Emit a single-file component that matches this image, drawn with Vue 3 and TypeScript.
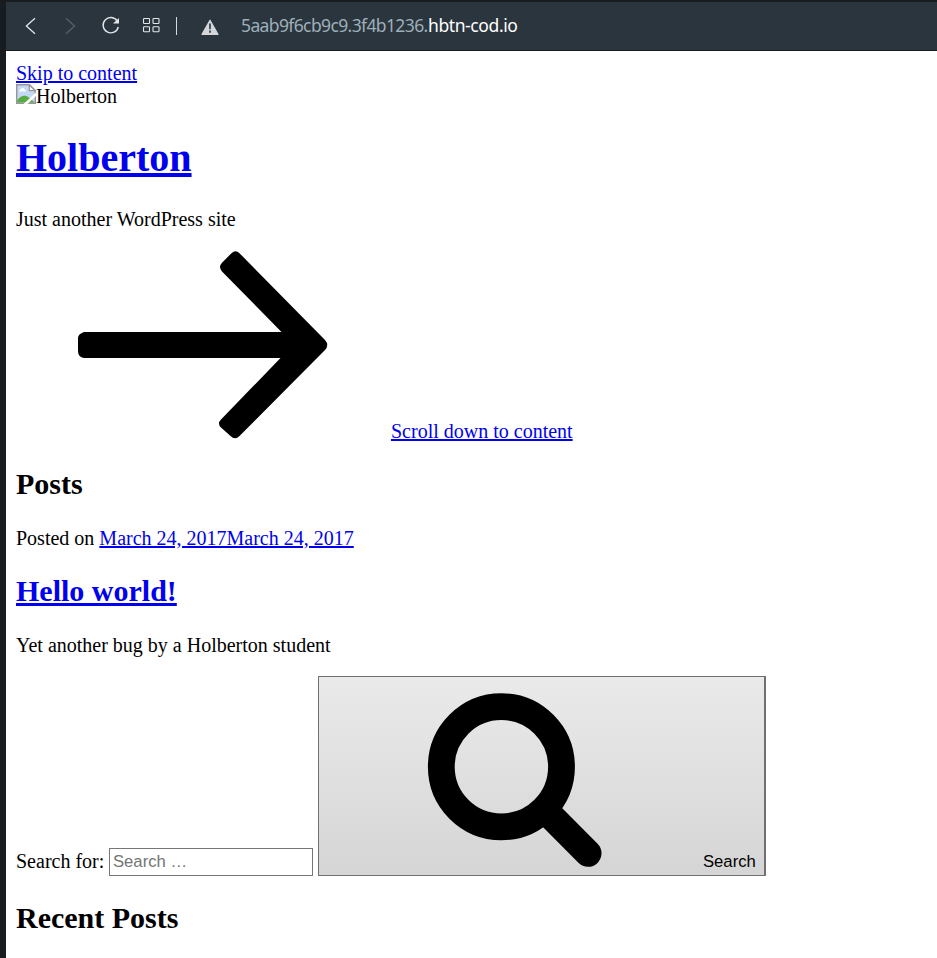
<script setup lang="ts">
const host: string = 'hbtn-cod.io'
const subdomain: string = '5aab9f6cb9c9.3f4b1236.'
const postDate: string = 'March 24, 2017'
</script>

<template>
  <div class="window">
    <header class="toolbar">
      <svg class="nav-icons" width="215" height="48" viewBox="6 2 215 48" fill="none" aria-hidden="true">
        <path d="M35 18.2 26.4 26 35 33.8" stroke="#e2e6e8" stroke-width="1.3" />
        <path d="M66 18.2 74.6 26 66 33.8" stroke="#596168" stroke-width="1.3" />
        <path d="M117.3 21A7.7 7.7 0 1 0 118.3 27" stroke="#e2e6e8" stroke-width="1.4" />
        <path d="M119 18v5.5h-6z" fill="#e2e6e8" />
        <g stroke="#e2e6e8" stroke-width="1.1">
          <rect x="143.5" y="18.5" width="6" height="5" rx=".8" />
          <rect x="153" y="18.5" width="6" height="5" rx=".8" />
          <rect x="143.5" y="26.8" width="6" height="5" rx=".8" />
          <rect x="153" y="26.8" width="6" height="5" rx=".8" />
        </g>
        <path d="M176.5 17v18" stroke="#d5dadd" />
        <path d="M210 20.2 218 34.3H202z" fill="#d3d7da" stroke="#d3d7da" stroke-width="1.2" stroke-linejoin="round" />
        <path d="M210 23.5v5.7M210 30.5v2.2" stroke="#4a535a" stroke-width="2" />
      </svg>
      <div class="address"><span class="subdomain">{{ subdomain }}</span><span class="host">{{ host }}</span></div>
    </header>

    <main class="page">
      <a class="line" href="#content">Skip to content</a>
      <div class="line logo">
        <svg width="20" height="20" viewBox="0 0 20 20" aria-hidden="true">
          <path d="M.7.7H13.5L19.3 6.5V19.3H.7z" fill="#c5d8f4" stroke="#979797" stroke-width="1.4" />
          <path d="M3.2 7.5c0-1.8 1-2.2 1.7-2.2.6-1.8 3-1.6 3.4 0 1 0 1.5.8 1.5 2.2z" fill="#fff" />
          <path d="M1.4 18.6V16C5 11 9.5 10.5 13 13.5L18.6 18.6z" fill="#57ad41" />
          <path d="M13.3 1V6.7H19z" fill="#fff" stroke="#979797" stroke-width="1.2" />
          <path d="M20 8.5V12L11.5 20H7.5z" fill="#fff" />
        </svg><span>Holberton</span>
      </div>
      <h1><a href="#home">Holberton</a></h1>
      <p class="tagline">Just another WordPress site</p>
      <div class="scroll">
        <svg width="375" height="188" viewBox="16 251 375 188" aria-hidden="true">
          <path d="M84 332H281.5L222 271.5Q218 267 222 262.8L231.5 253.2Q235.5 249.2 239.5 253.2L325 340Q329.5 345 325 350L239.5 436Q235 440.5 230.5 436L221 427.5Q217 423.5 221 419.5L280.5 358H84Q78 357 78 351V338Q78 334 84 332Z" />
        </svg><a href="#content">Scroll down to content</a>
      </div>
      <h2 id="content">Posts</h2>
      <p>Posted on <a href="#post">{{ postDate }}{{ postDate }}</a></p>
      <h2><a href="#post">Hello world!</a></h2>
      <p>Yet another bug by a Holberton student</p>
      <form class="search" @submit.prevent>
        <label for="search-field">Search for:</label>
        <input id="search-field" type="search" placeholder="Search …">
        <button type="submit">
          <svg width="375" height="188" viewBox="328 680 375 188" fill="none" stroke="#000" aria-hidden="true">
            <circle cx="501.4" cy="766.8" r="60.1" stroke-width="26.8" />
            <path d="M545 810 588 853.3" stroke-width="27" stroke-linecap="round" />
          </svg><span>Search</span>
        </button>
      </form>
      <h2>Recent Posts</h2>
    </main>
  </div>
</template>

<style>
body {
  margin: 0;
  overflow: hidden;
}
</style>

<style scoped>
.window {
  box-sizing: border-box;
  height: 958px;
  overflow: hidden;
  padding: 2px 0 0 6px;
  background: #171c20;
}
.toolbar {
  display: flex;
  align-items: center;
  height: 48px;
  margin-bottom: 1px;
  background: #2b353e;
}
.nav-icons {
  flex: none;
}
.address {
  display: flex;
  margin: 0 0 2px 20px;
  font: 17.5px/24px "Noto Sans", sans-serif;
  white-space: pre;
}
.subdomain {
  width: 187px;
  color: #9eafb9;
  letter-spacing: -0.62px;
}
.host {
  color: #fff;
  letter-spacing: -0.4px;
}
.page {
  box-sizing: border-box;
  height: 907px;
  padding: 11px 10px 0;
  overflow: hidden;
  background: #fff;
  color: #000;
  font: 20px/23px "Liberation Serif", serif;
}
a {
  color: #0000ee;
  text-decoration: underline 2px;
  text-underline-offset: 1px;
}
h1 a {
  text-decoration-thickness: 4px;
  text-underline-offset: 2px;
}
h2 a {
  text-decoration-thickness: 3px;
  text-underline-offset: 2px;
}
.line {
  display: block;
  height: 23px;
}
.logo {
  display: flex;
}
.logo svg {
  margin-top: -1px;
}
h1 {
  margin: 27px 0;
  font-size: 40px;
  line-height: 46px;
}
h2 {
  margin: 24px 0 26px;
  font-size: 30px;
  line-height: 34px;
}
p {
  margin: 20px 0 19px;
}
.tagline {
  margin: 27px 0 20px;
}
.scroll {
  display: flex;
  align-items: flex-end;
  height: 192px;
}
.scroll svg {
  margin-bottom: 4px;
}
.search {
  display: flex;
  align-items: flex-end;
  height: 200px;
  margin-bottom: 25px;
}
.search label {
  width: 93px;
  margin-bottom: 3px;
}
input {
  box-sizing: border-box;
  width: 204px;
  height: 28px;
  margin: 0 5px 0 0;
  padding: 1px 3px;
  border: 1px solid #767676;
  border-radius: 0;
  outline: 0;
  appearance: none;
  background: #fff;
  font: 16.67px "Liberation Sans", sans-serif;
}
input::placeholder {
  color: #757575;
}
button {
  display: flex;
  align-items: flex-end;
  box-sizing: border-box;
  width: 448px;
  height: 200px;
  margin: 0;
  padding: 0 0 3px 9px;
  border: 1px solid #707070;
  border-right-width: 2px;
  border-radius: 0;
  background: linear-gradient(#eaeaea, #d5d5d5);
  color: #000;
  font: 16.67px/20px "Liberation Sans", sans-serif;
}
button svg {
  flex: none;
  margin-bottom: 4px;
}
</style>
